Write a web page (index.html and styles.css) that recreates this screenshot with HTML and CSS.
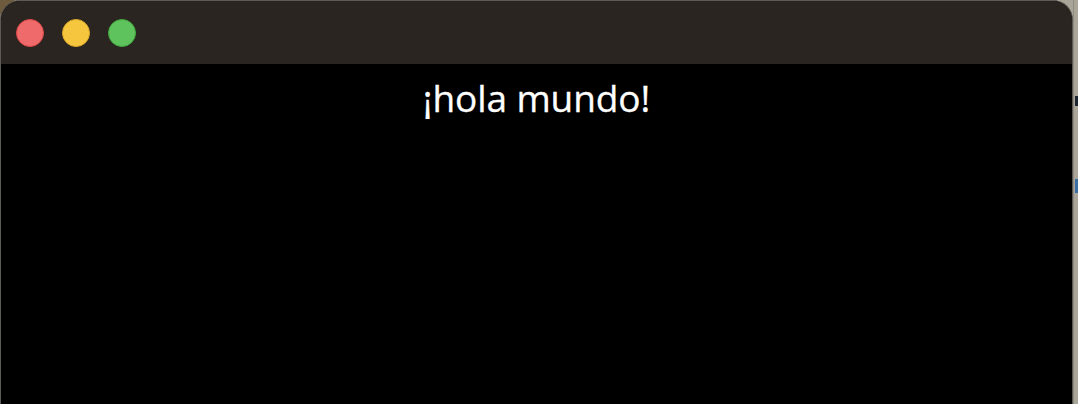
FILE: index.html
```html
<!DOCTYPE html>
<html>
<head>
<meta charset="utf-8">
<link rel="stylesheet" href="styles.css">
</head>
<body>
<div class="desktop">
  <div class="window">
    <div class="titlebar">
      <span class="light red"></span>
      <span class="light yellow"></span>
      <span class="light green"></span>
    </div>
    <div class="content">
      <h1 class="title">¡hola mundo!</h1>
    </div>
  </div>
  <div class="side">
    <span class="side-mark"></span>
    <span class="side-blue"></span>
  </div>
</div>
</body>
</html>
```
FILE: styles.css
```css
html, body {
  margin: 0;
  padding: 0;
  width: 1078px;
  height: 404px;
  overflow: hidden;
  background: #a9a699;
  font-family: "Open Sans", "Liberation Sans", sans-serif;
}
.desktop {
  display: flex;
  height: 404px;
  background: linear-gradient(135deg, #6e5a3c 0, #6e5a3c 10px, #a9a699 12px);
}
.window {
  width: 1073px;
  height: 410px;
  flex: none;
  border: 1px solid #5e5a55;
  border-bottom: none;
  border-radius: 20px 20px 0 0;
  overflow: hidden;
  display: flex;
  flex-direction: column;
  background: #000;
  box-sizing: border-box;
}
.titlebar {
  height: 63px;
  flex: none;
  background: #2a2521;
  display: flex;
  align-items: center;
  gap: 18px;
  padding-left: 15px;
}
.light {
  width: 28px;
  height: 28px;
  border-radius: 50%;
  box-sizing: border-box;
}
.red { background: #ef6a6a; border: 1px solid #dc4846; }
.yellow { background: #f5c63e; border: 1px solid #dcaa2a; }
.green { background: #5fc35d; border: 1px solid #42a83f; }
.content {
  flex: 1;
  background: #000;
  display: flex;
  justify-content: center;
}
.title {
  margin: 14px 0 0 0;
  color: #fff;
  font-weight: 400;
  font-size: 37px;
  line-height: 40px;
  letter-spacing: -0.1px;
  -webkit-text-stroke: 0.3px #fff;
}
.side {
  flex: 1;
  position: relative;
  border-left: 1px solid #8f8c83;
}
.side-mark {
  position: absolute;
  left: 1px;
  top: 96px;
  width: 3px;
  height: 10px;
  background: #1c2530;
}
.side-blue {
  position: absolute;
  left: 1px;
  top: 179px;
  width: 4px;
  height: 14px;
  background: #3a6ea5;
}
```
